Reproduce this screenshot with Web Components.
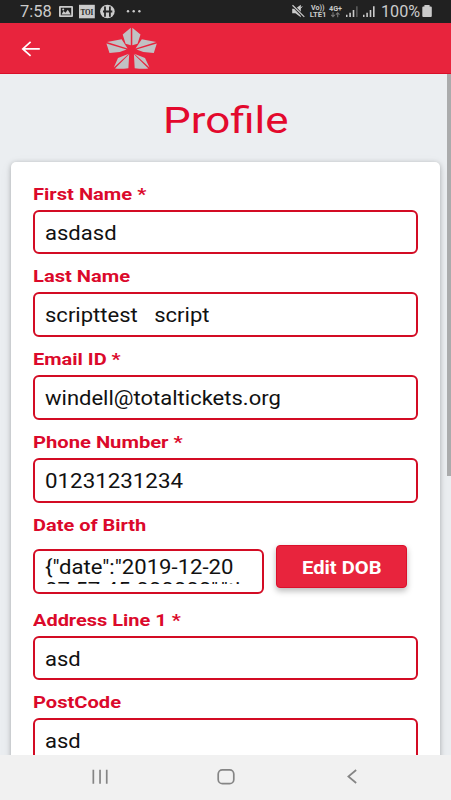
<!DOCTYPE html>
<html lang="en">
<head>
<meta charset="utf-8">
<title>Profile</title>
<style>
html,body{margin:0;height:100%;overflow:hidden;font-family:Roboto,"Liberation Sans",sans-serif}
</style>
</head>
<body>
<profile-app></profile-app>
<script>
const define=(name,html,setup)=>customElements.define(name,class extends HTMLElement{
  connectedCallback(){
    if(!this.shadowRoot){const t=document.createElement('template');t.innerHTML=html;
      this.attachShadow({mode:'open'}).append(t.content.cloneNode(true));}
    if(setup)setup(this,this.shadowRoot);
  }
});

/* Text stretched horizontally to fill its given width */
define('wide-text',`<style>:host{display:block;white-space:pre;flex:none}span{display:inline-block;transform-origin:0 0}</style><span><slot></slot></span>`,
 (el,root)=>{const w=+el.getAttribute('w'),s=root.querySelector('span');el.style.width=w+'px';
  s.style.transform='scaleX('+w/s.getBoundingClientRect().width+')';});

define('status-bar',`<style>
:host{display:flex;height:22.7px;background:#212121;color:#cbcbcb;align-items:center;font-size:15.8px;line-height:22.7px;box-sizing:border-box;padding-left:19.5px}
svg{display:block;flex:none}.gap{flex:1}wide-text{padding-top:1.4px}
</style>
<wide-text w="31.7">7:58</wide-text>
<svg width="92" height="22" viewBox="51 0 92 22" fill="#cbcbcb">
 <path fill-rule="evenodd" d="M60 6h12q1 0 1 1v9q0 1-1 1H60q-1 0-1-1V7q0-1 1-1zm.8 1.8v7.4h10.4V7.8z"/>
 <path d="M61.5 14.5l2-3.4 2 1.7 2.3-3 3 4.7z"/><circle cx="63.2" cy="9.5" r="1"/>
 <rect x="79" y="4.8" width="15.8" height="13.5"/>
 <text x="80.4" y="14.6" font-family="Liberation Serif" font-weight="700" font-size="8.2" textLength="13" lengthAdjust="spacingAndGlyphs" fill="#252525">TOI</text>
 <ellipse cx="107.4" cy="11.5" rx="7.3" ry="6.7"/>
 <path d="M105 6.5v10.3M109.9 6.5v10.3M103 11.5h9.3" stroke="#252525" stroke-width="1.8"/>
 <circle cx="128" cy="11.3" r="1.2"/><circle cx="133.7" cy="11.3" r="1.2"/><circle cx="139.4" cy="11.3" r="1.2"/>
</svg>
<div class="gap"></div>
<svg width="91" height="22" viewBox="290 0 91 22" fill="#cbcbcb">
 <path d="M292.2 8.7h3.2l5.4-3.9v12.5l-5.4-4h-3.2z"/>
 <path d="M292.4 5l11.6 12" stroke="#212121" stroke-width="2.8"/><path d="M292.5 5.2l11.8 11.7" stroke="#cbcbcb" stroke-width="1.2"/>
 <path d="M302.2 6.4l-1.8 2.2" stroke="#cbcbcb" fill="none"/>
 <g font-family="Roboto" font-weight="700">
 <text x="311" y="9.9" font-size="6.4" textLength="13.5" lengthAdjust="spacingAndGlyphs">Vo))</text>
 <text x="309.7" y="17.4" font-size="6.6" textLength="16.8" lengthAdjust="spacingAndGlyphs">LTE1</text>
 <text x="329" y="10.5" font-size="6.6" textLength="13" lengthAdjust="spacingAndGlyphs">4G+</text></g>
 <path d="M333 12.2v4.4M331.2 14.8l1.8 1.9 1.8-1.9M337.7 17.2v-4.4M335.9 14.6l1.8-1.9 1.8 1.9" stroke="#777" fill="none" stroke-width="1.1"/>
 <path d="M346 14.7h1.5V17H346zM349.3 12.7h1.6V17h-1.6zM352.7 9.9h1.6V17h-1.6zM363 14.7h1.5V17H363zM366.3 12.7h1.6V17h-1.6zM369.7 9.9h1.6V17h-1.6zM373 6.2h1.6V17H373z"/><path fill="#575757" d="M356 6.2h1.7V17H356z"/>
</svg>
<wide-text w="39.2">100%</wide-text>
<svg width="31" height="22" viewBox="420 0 31 22" fill="#cbcbcb"><path d="M424.4 5h5.2v1.5h1.2q1 0 1 1V16q0 1-1 1h-7.5q-1 0-1-1V7.5q0-1 1-1h1.1z"/></svg>`);

define('app-header',`<style>
:host{display:flex;height:51.3px;background:#e8243d;box-sizing:border-box;border-bottom:1px solid #d90f29;align-items:flex-start;padding-left:20px}
svg{display:block}.logo{margin-left:62px}
</style>
<svg width="22" height="50" viewBox="20 22.7 22 50" fill="none" stroke="#fff" stroke-width="1.7"><path d="M39.8 48.6H23.2M30.6 41.5l-7.8 7.1 7.8 7"/></svg>
<svg class="logo" width="54" height="50" viewBox="104 22.7 54 50" fill="#c1c2c4">
<path d="M130.8 27.5L122.7 34.2 125.6 43.5 130.8 45zM132.3 27.5L140.5 34.2 137.5 43.5 132.3 45z"/>
<path d="M107 41.6L121.6 39 127.6 48.2zM106.4 43.2L109.5 52.6 119.8 51.8 126.6 49.2z"/>
<path d="M156.2 41.6L141.8 39 135.5 48.2zM156.8 43.2L153.8 52.6 143.3 51.8 136.5 49.2z"/>
<path d="M128.8 53.5L118 57.8 113.8 67.2zM129.2 54L128.4 67.9Q121 68.9 115 68.3z"/>
<path d="M134.3 53.5L145 57.8 149.5 67.2zM133.9 54L134.7 67.9Q142 68.9 148.3 68.3z"/>
</svg>`);

define('form-field',`<style>
:host{display:block;height:82.75px}
.label{color:#db092b;font-weight:700;font-size:17.4px;line-height:27px;height:29.1px}
.box{box-sizing:border-box;height:44.7px;border:2px solid #d30c24;border-radius:6px;padding-left:9.4px;font-size:19.4px;line-height:44.4px;color:#111}
</style>
<wide-text class="label"><slot name="label"></slot></wide-text><div class="box"><slot></slot></div>`,
 (el,root)=>{fit(root.querySelector('.label'),+el.getAttribute('label-width'));});

define('dob-field',`<style>
:host{display:block;height:95px}
.label{color:#db092b;font-weight:700;font-size:17.4px;line-height:27px;height:27px}
.row{display:flex;align-items:flex-start}
.box{box-sizing:border-box;margin-top:10.7px;width:231px;height:44.4px;border:2px solid #d30c24;border-radius:6px;padding:5.4px 0 0 9.4px;font-size:19.4px;color:#111}
.clip{height:27.6px;overflow:hidden;line-height:22px}
.clip :first-child{height:23px}
.btn{box-sizing:border-box;margin:6.7px 0 0 11.7px;width:131.3px;height:43px;padding-left:25px;background:#e8243d;border:1px solid #db102b;border-radius:4px;box-shadow:0 3px 6px rgba(0,0,0,.28);color:#fff;font-weight:700;font-size:18.2px;line-height:43px}
</style>
<wide-text class="label" w="113.3">Date of Birth</wide-text>
<div class="row"><div class="box"><div class="clip"><wide-text w="188.5">{"date":"2019-12-20</wide-text><wide-text w="195.5">07:57:45.000000","ti</wide-text></div></div>
<div class="btn"><wide-text w="79.5">Edit DOB</wide-text></div></div>`);

function fit(t,w){t.style.width=w+'px';const s=t.shadowRoot.querySelector('span');s.style.transform='none';
  s.style.transform='scaleX('+w/s.getBoundingClientRect().width+')';}

define('profile-card',`<style>
:host{display:block;box-sizing:border-box;margin:20px 10.7px 0 11px;width:429px;height:700px;background:#fff;border-radius:5px;padding:18.1px 22px 0 22.2px;box-shadow:0 1px 5px rgba(0,0,0,.25),0 3px 14px rgba(0,0,0,.06)}
</style><slot></slot>`);

define('page-content',`<style>
:host{display:flex;height:680.8px;background:#ebeef1;overflow:hidden}
.main{width:446.7px;flex:none}
.title{height:44px;line-height:44px;font-size:37.5px;color:#e3092d;margin:24.5px 0 0 162.9px}
.thumb{width:4.3px;height:402px;background:#aaabac}
</style>
<div class="main"><wide-text class="title" w="125.6">Profile</wide-text><slot></slot></div><div class="thumb"></div>`);

define('nav-bar',`<style>:host{display:block;height:45.2px;background:#f1f1f1}svg{display:block}</style>
<svg width="451" height="45.2" viewBox="0 754.8 451 45.2" fill="none" stroke="#858585" stroke-width="1.7">
<path d="M93.3 769.5v14M100 769.5v14M106.7 769.5v14"/><rect x="218.2" y="769.6" width="15.6" height="13.8" rx="4.2"/><path d="M356.2 769.8l-7.8 6.5 7.8 6.5"/></svg>`);

define('profile-app',`<style>:host{display:block;width:451px;height:800px;overflow:hidden}</style>
<status-bar></status-bar><app-header></app-header>
<page-content><profile-card>
<form-field label-width="113.3"><span slot="label">First Name *</span><wide-text w="71.6">asdasd</wide-text></form-field>
<form-field label-width="97"><span slot="label">Last Name</span><wide-text w="164.5">scripttest   script</wide-text></form-field>
<form-field label-width="87.7"><span slot="label">Email ID *</span><wide-text w="235.8">windell@totaltickets.org</wide-text></form-field>
<form-field label-width="149.7"><span slot="label">Phone Number *</span><wide-text w="138">01231231234</wide-text></form-field>
<dob-field></dob-field>
<form-field label-width="147.7"><span slot="label">Address Line 1 *</span><wide-text w="35.7">asd</wide-text></form-field>
<form-field label-width="88"><span slot="label">PostCode</span><wide-text w="35.7">asd</wide-text></form-field>
</profile-card></page-content><nav-bar></nav-bar>`);
</script>
</body>
</html>
